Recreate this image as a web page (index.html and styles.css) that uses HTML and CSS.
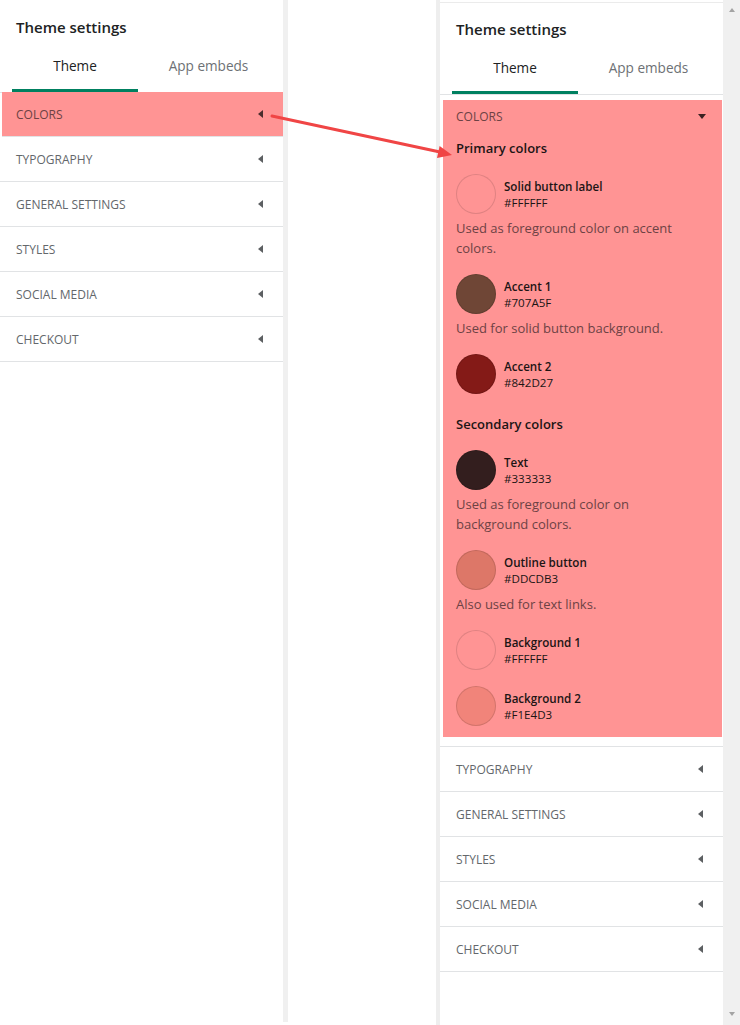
FILE: index.html
```html
<!DOCTYPE html>
<html lang="en">
<head>
<meta charset="utf-8">
<title>Theme settings</title>
<link rel="stylesheet" href="styles.css">
</head>
<body>
<div class="stage">
  <aside class="panel panel--left">
    <h1 class="panel-title">Theme settings</h1>
    <div class="tabs">
      <div class="tab tab--active">Theme</div>
      <div class="tab tab--rest">App embeds</div>
    </div>
    <ul class="rows">
      <li class="row row--hl"><span class="row-label">COLORS</span><span class="caret-left"></span></li>
      <li class="row"><span class="row-label">TYPOGRAPHY</span><span class="caret-left"></span></li>
      <li class="row"><span class="row-label">GENERAL SETTINGS</span><span class="caret-left"></span></li>
      <li class="row"><span class="row-label">STYLES</span><span class="caret-left"></span></li>
      <li class="row"><span class="row-label">SOCIAL MEDIA</span><span class="caret-left"></span></li>
      <li class="row"><span class="row-label">CHECKOUT</span><span class="caret-left"></span></li>
    </ul>
  </aside>
  <div class="strip"></div>
  <div class="gap"></div>
  <div class="frame">
    <aside class="panel panel--right">
      <h1 class="panel-title">Theme settings</h1>
      <div class="tabs">
        <div class="tab tab--active">Theme</div>
        <div class="tab tab--rest">App embeds</div>
      </div>
      <section class="section-open">
        <div class="section-box">
          <div class="section-head"><span class="head-label">COLORS</span><span class="caret-down"></span></div>
          <h2 class="group-title">Primary colors</h2>
          <div class="swatch-item">
            <div class="swatch-row"><span class="swatch" style="background:#FF9494"></span><div class="swatch-text"><div class="swatch-label">Solid button label</div><div class="swatch-hex">#FFFFFF</div></div></div>
            <p class="swatch-desc">Used as foreground color on accent colors.</p>
          </div>
          <div class="swatch-item">
            <div class="swatch-row"><span class="swatch" style="background:#6F4636"></span><div class="swatch-text"><div class="swatch-label">Accent 1</div><div class="swatch-hex">#707A5F</div></div></div>
            <p class="swatch-desc">Used for solid button background.</p>
          </div>
          <div class="swatch-item">
            <div class="swatch-row"><span class="swatch" style="background:#841A17"></span><div class="swatch-text"><div class="swatch-label">Accent 2</div><div class="swatch-hex">#842D27</div></div></div>
          </div>
          <h2 class="group-title group-title--second">Secondary colors</h2>
          <div class="swatch-item">
            <div class="swatch-row"><span class="swatch" style="background:#331E1E"></span><div class="swatch-text"><div class="swatch-label">Text</div><div class="swatch-hex">#333333</div></div></div>
            <p class="swatch-desc">Used as foreground color on background colors.</p>
          </div>
          <div class="swatch-item">
            <div class="swatch-row"><span class="swatch" style="background:#DD7768"></span><div class="swatch-text"><div class="swatch-label">Outline button</div><div class="swatch-hex">#DDCDB3</div></div></div>
            <p class="swatch-desc">Also used for text links.</p>
          </div>
          <div class="swatch-item">
            <div class="swatch-row"><span class="swatch" style="background:#FF9494"></span><div class="swatch-text"><div class="swatch-label">Background 1</div><div class="swatch-hex">#FFFFFF</div></div></div>
          </div>
          <div class="swatch-item">
            <div class="swatch-row"><span class="swatch" style="background:#F1847A"></span><div class="swatch-text"><div class="swatch-label">Background 2</div><div class="swatch-hex">#F1E4D3</div></div></div>
          </div>
        </div>
      </section>
      <ul class="rows">
        <li class="row"><span class="row-label">TYPOGRAPHY</span><span class="caret-left"></span></li>
        <li class="row"><span class="row-label">GENERAL SETTINGS</span><span class="caret-left"></span></li>
        <li class="row"><span class="row-label">STYLES</span><span class="caret-left"></span></li>
        <li class="row"><span class="row-label">SOCIAL MEDIA</span><span class="caret-left"></span></li>
        <li class="row"><span class="row-label">CHECKOUT</span><span class="caret-left"></span></li>
      </ul>
    </aside>
    <div class="scrollbar"><span class="sb-up"></span><span class="sb-down"></span></div>
  </div>
  <svg class="arrow" width="740" height="1025" viewBox="0 0 740 1025" aria-hidden="true">
    <line x1="272" y1="116" x2="440" y2="152" stroke="#F04545" stroke-width="3" stroke-linecap="round"/>
    <polygon points="452,155 439.6,146 437,158" fill="#F04545"/>
  </svg>
</div>
</body>
</html>
```
FILE: styles.css
```css
* { box-sizing: border-box; }
html, body { margin: 0; padding: 0; background: #ffffff; }
body {
  font-family: "Open Sans", "Noto Sans", "Liberation Sans", sans-serif;
  color: #202223;
}
.stage {
  position: relative;
  display: flex;
  width: 740px;
  height: 1025px;
  overflow: hidden;
}
.panel {
  width: 283px;
  flex: none;
  background: #ffffff;
}
.panel--left { height: 1022px; }
.strip {
  width: 5px;
  height: 1022px;
  flex: none;
  background: #f0f0f0;
}
.gap { width: 148px; flex: none; }
.frame {
  display: flex;
  flex: none;
  border-left: 4px solid #eeeeee;
  height: 1025px;
}
.panel--right {
  margin-top: 2px;
  border-top: 1px solid #ebebeb;
}
.panel-title {
  margin: 0;
  padding: 17px 16px 0;
  font-size: 15px;
  line-height: 20px;
  font-weight: 600;
  color: #202223;
}
.panel--right .panel-title { padding-top: 16px; }
.tabs {
  display: flex;
  margin-top: 7px;
  padding: 0 4px 0 12px;
  border-bottom: 1px solid #e1e3e5;
}
.tab {
  padding: 12px 0 13px;
  font-size: 13.6px;
  line-height: 20px;
  text-align: center;
  color: #6d7175;
  border-bottom: 3px solid transparent;
}
.tab--active {
  width: 126px;
  color: #202223;
  border-bottom-color: #008060;
}
.tab--rest { flex: 1; }
.rows { list-style: none; margin: 0; padding: 0; }
.row {
  display: flex;
  align-items: center;
  justify-content: space-between;
  height: 45px;
  padding: 0 20px 0 16px;
  border-bottom: 1px solid #e1e3e5;
  font-size: 12px;
  color: #63676b;
}
.row--hl {
  margin-top: -1px;
  margin-left: 2px;
  padding-left: 14px;
  background: #ff9494;
  color: #6d4244;
}
.caret-left {
  width: 0;
  height: 0;
  border-top: 4.5px solid transparent;
  border-bottom: 4.5px solid transparent;
  border-right: 5px solid #5c5f62;
}
.row--hl .caret-left { border-right-color: #4a2c2c; }
.section-open {
  padding: 5px 1px 9px 3px;
  border-bottom: 1px solid #e1e3e5;
}
.section-box {
  background: #ff9494;
  padding: 0 16px 11px 13px;
}
.section-head {
  display: flex;
  align-items: center;
  justify-content: space-between;
  height: 32px;
  font-size: 12px;
  color: #6d4244;
}
.caret-down {
  width: 0;
  height: 0;
  border-left: 4.5px solid transparent;
  border-right: 4.5px solid transparent;
  border-top: 5px solid #3a2222;
}
.group-title {
  margin: 6px 0 0;
  font-size: 13px;
  line-height: 20px;
  font-weight: 600;
  color: #201414;
}
.group-title--second { margin-top: 20px; }
.swatch-item { margin-top: 16px; }
.swatch-row {
  display: flex;
  align-items: center;
  gap: 8px;
}
.swatch {
  width: 40px;
  height: 40px;
  flex: none;
  border-radius: 50%;
  border: 1px solid rgba(0, 0, 0, 0.12);
}
.swatch-text {
  padding-top: 2px;
  font-size: 11.6px;
  line-height: 16px;
  color: #201414;
}
.swatch-label { font-weight: 600; }
.swatch-desc {
  margin: 4px 0 0;
  max-width: 235px;
  font-size: 13px;
  line-height: 20px;
  color: #6d4244;
}
.scrollbar {
  position: relative;
  width: 17px;
  flex: none;
  background: #f0f0f0;
  display: flex;
  flex-direction: column;
  justify-content: space-between;
  align-items: center;
  padding: 8px 0 9px;
}
.sb-up, .sb-down {
  width: 0;
  height: 0;
  border-left: 3.5px solid transparent;
  border-right: 3.5px solid transparent;
}
.sb-up { border-bottom: 4px solid #a3a3a3; }
.sb-down { border-top: 4px solid #a3a3a3; }
.arrow {
  position: absolute;
  left: 0;
  top: 0;
  pointer-events: none;
}
```
